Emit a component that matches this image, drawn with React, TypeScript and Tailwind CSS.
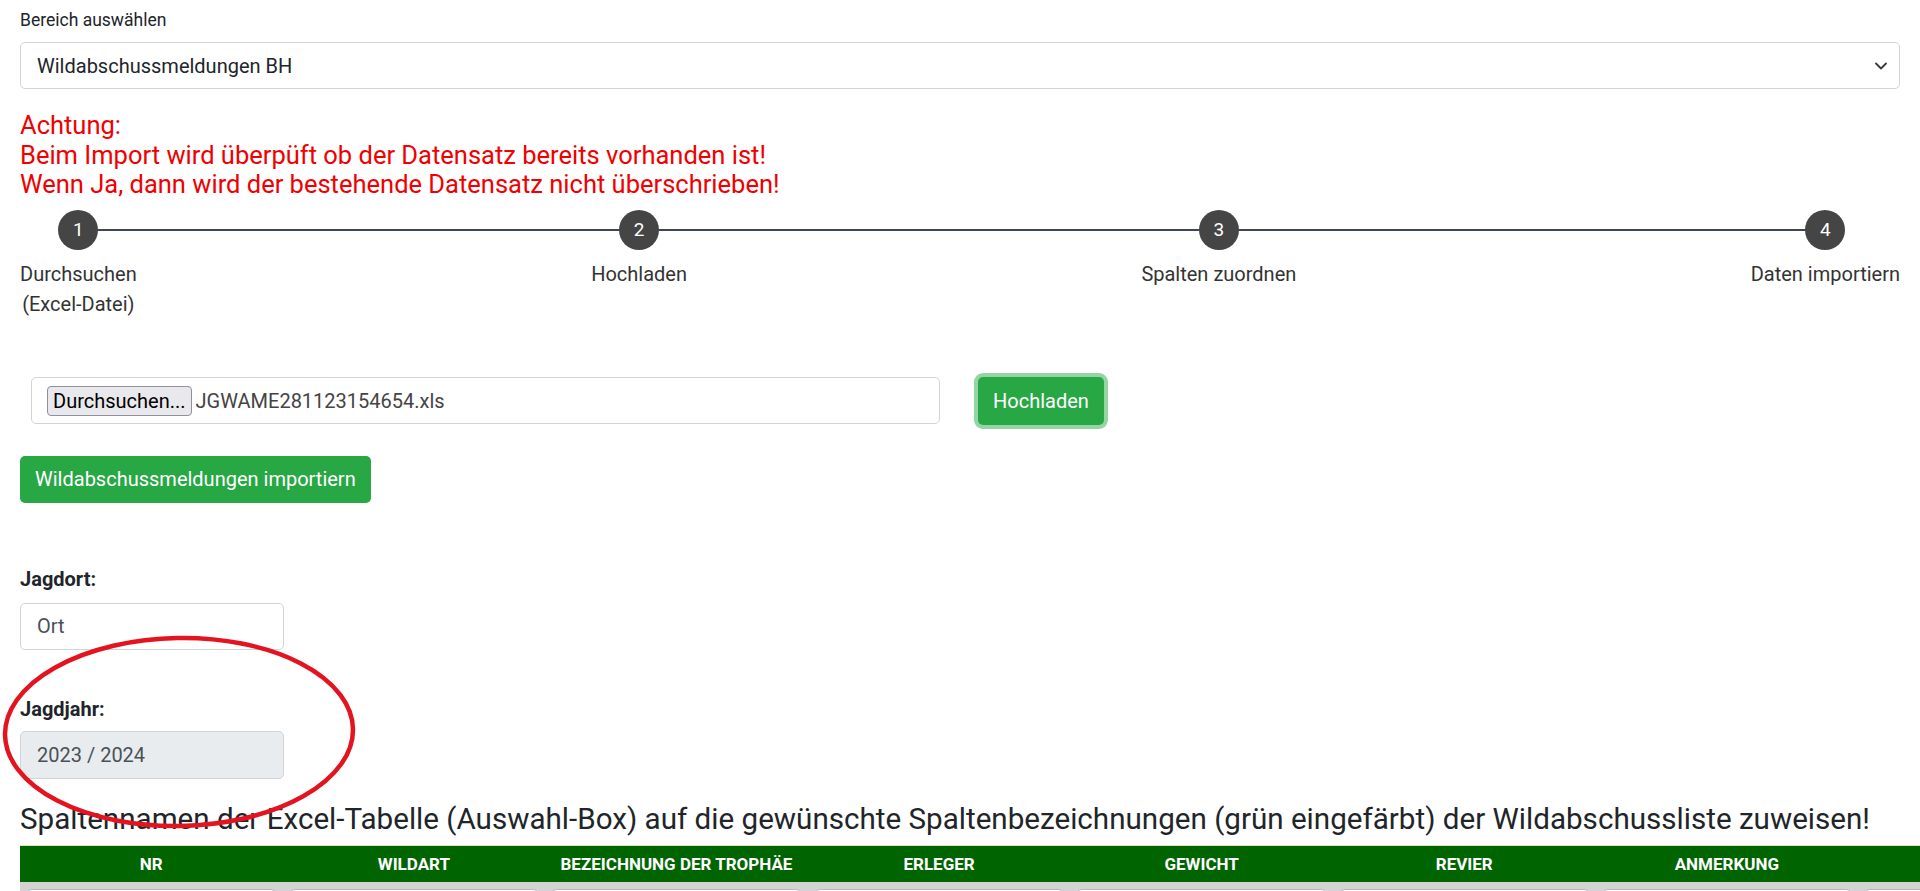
import React from "react";

const steps = [
  { n: 1, label: ["Durchsuchen", "(Excel-Datei)"] },
  { n: 2, label: ["Hochladen"] },
  { n: 3, label: ["Spalten zuordnen"] },
  { n: 4, label: ["Daten importiern"] },
];

const columns = ["NR", "WILDART", "BEZEICHNUNG DER TROPHÄE", "ERLEGER", "GEWICHT", "REVIER", "ANMERKUNG", ""];

export default function App() {
  return (
    <div
      className="relative w-full h-[891px] overflow-hidden bg-white text-[#212529] text-[20px] leading-[30px]"
      style={{ fontFamily: '"Segoe UI", Roboto, "Liberation Sans", sans-serif' }}
    >
      <div className="px-[20px] pt-[5px]">
        {/* Bereich */}
        <div className="mb-[7px] text-[17.5px]">Bereich auswählen</div>
        <div className="flex items-center justify-between h-[47px] rounded-[5px] border border-[#ced4da] pl-[16px] pr-[12px] text-[#212529]">
          <span>Wildabschussmeldungen BH</span>
          <svg width="12" height="8" viewBox="0 0 12 8" fill="none" stroke="#343a40" strokeWidth="1.8" strokeLinecap="round" strokeLinejoin="round">
            <path d="M1 1.5l5 5 5-5" />
          </svg>
        </div>

        {/* Hinweis */}
        <div className="mt-[22px] text-[25.5px] leading-[29.5px] text-[#f00000]">
          <div>Achtung:</div>
          <div>Beim Import wird überpüft ob der Datensatz bereits vorhanden ist!</div>
          <div>Wenn Ja, dann wird der bestehende Datensatz nicht überschrieben!</div>
        </div>

        {/* Stepper */}
        <div className="relative mt-[10px] flex justify-between">
          <div className="absolute left-[56px] right-[75px] top-[19px] h-[2px] bg-[#3f4752]" />
          {steps.map((s) => (
            <div key={s.n} className="relative flex flex-col items-center">
              <div className="flex h-[40px] w-[40px] items-center justify-center rounded-full bg-[#454545] text-[19px] text-white">
                {s.n}
              </div>
              <div className="mt-[9px] text-center text-[#333]">
                {s.label.map((l) => (
                  <div key={l}>{l}</div>
                ))}
              </div>
            </div>
          ))}
        </div>

        {/* Upload */}
        <div className="mt-[58px] ml-[11px] flex items-center gap-[38px]">
          <div className="flex h-[47px] w-[909px] items-center rounded-[5px] border border-[#ced4da] pl-[15px]">
            <div className="flex h-[30px] items-center rounded-[4px] border border-[#8f8f9d] bg-[#e9e9ed] px-[5px] text-[20px] text-black">
              Durchsuchen...
            </div>
            <span className="ml-[4px] text-[20px] text-[#444]">JGWAME281123154654.xls</span>
          </div>
          <button className="h-[48px] rounded-[5px] bg-[#28a745] px-[15px] text-white ring-[4px] ring-[#95d4a3]">
            Hochladen
          </button>
        </div>

        <button className="mt-[31px] h-[47px] rounded-[5px] bg-[#28a745] px-[15px] text-white">
          Wildabschussmeldungen importiern
        </button>

        {/* Jagdort */}
        <div className="mt-[61px] font-bold">Jagdort:</div>
        <div className="mt-[9px] flex h-[47px] w-[264px] items-center rounded-[5px] border border-[#ced4da] pl-[16px] text-[#495057]">
          Ort
        </div>

        <div className="mt-[44px] font-bold">Jagdjahr:</div>
        <div className="mt-[7px] flex h-[48px] w-[264px] items-center rounded-[5px] border border-[#ced4da] bg-[#e9ecef] pl-[16px] text-[#495057]">
          2023 / 2024
        </div>

        <h4 className="mt-[22px] text-[29.6px] leading-[36px] font-normal text-[#212529]">
          Spaltennamen der Excel-Tabelle (Auswahl-Box) auf die gewünschte Spaltenbezeichnungen (grün eingefärbt) der Wildabschussliste zuweisen!
        </h4>

        {/* Tabelle */}
        <div className="mt-[8px] w-[2101px]">
          <div className="grid grid-cols-[repeat(8,262.6px)] h-[37px] border-t border-[#e3dfbf] bg-[#006400]">
            {columns.map((c, i) => (
              <div key={i} className="flex items-center justify-center text-[17px] font-bold text-white">
                {c}
              </div>
            ))}
          </div>
          <div className="grid grid-cols-[repeat(8,262.6px)] bg-[#d3d3d3] pt-[7px]">
            {columns.map((c, i) => (
              <div key={i} className="px-[6px]">
                <div className="h-[40px] rounded-t-[6px] border border-[#b8b8b8] bg-white" />
              </div>
            ))}
          </div>
        </div>
      </div>

      {/* Markierung */}
      <svg className="pointer-events-none absolute left-0 top-0" width="400" height="891" viewBox="0 0 400 891">
        <ellipse cx="179" cy="732" rx="174" ry="94" fill="none" stroke="#e3141f" strokeWidth="4.5" transform="rotate(-1 179 732)" />
      </svg>
    </div>
  );
}
